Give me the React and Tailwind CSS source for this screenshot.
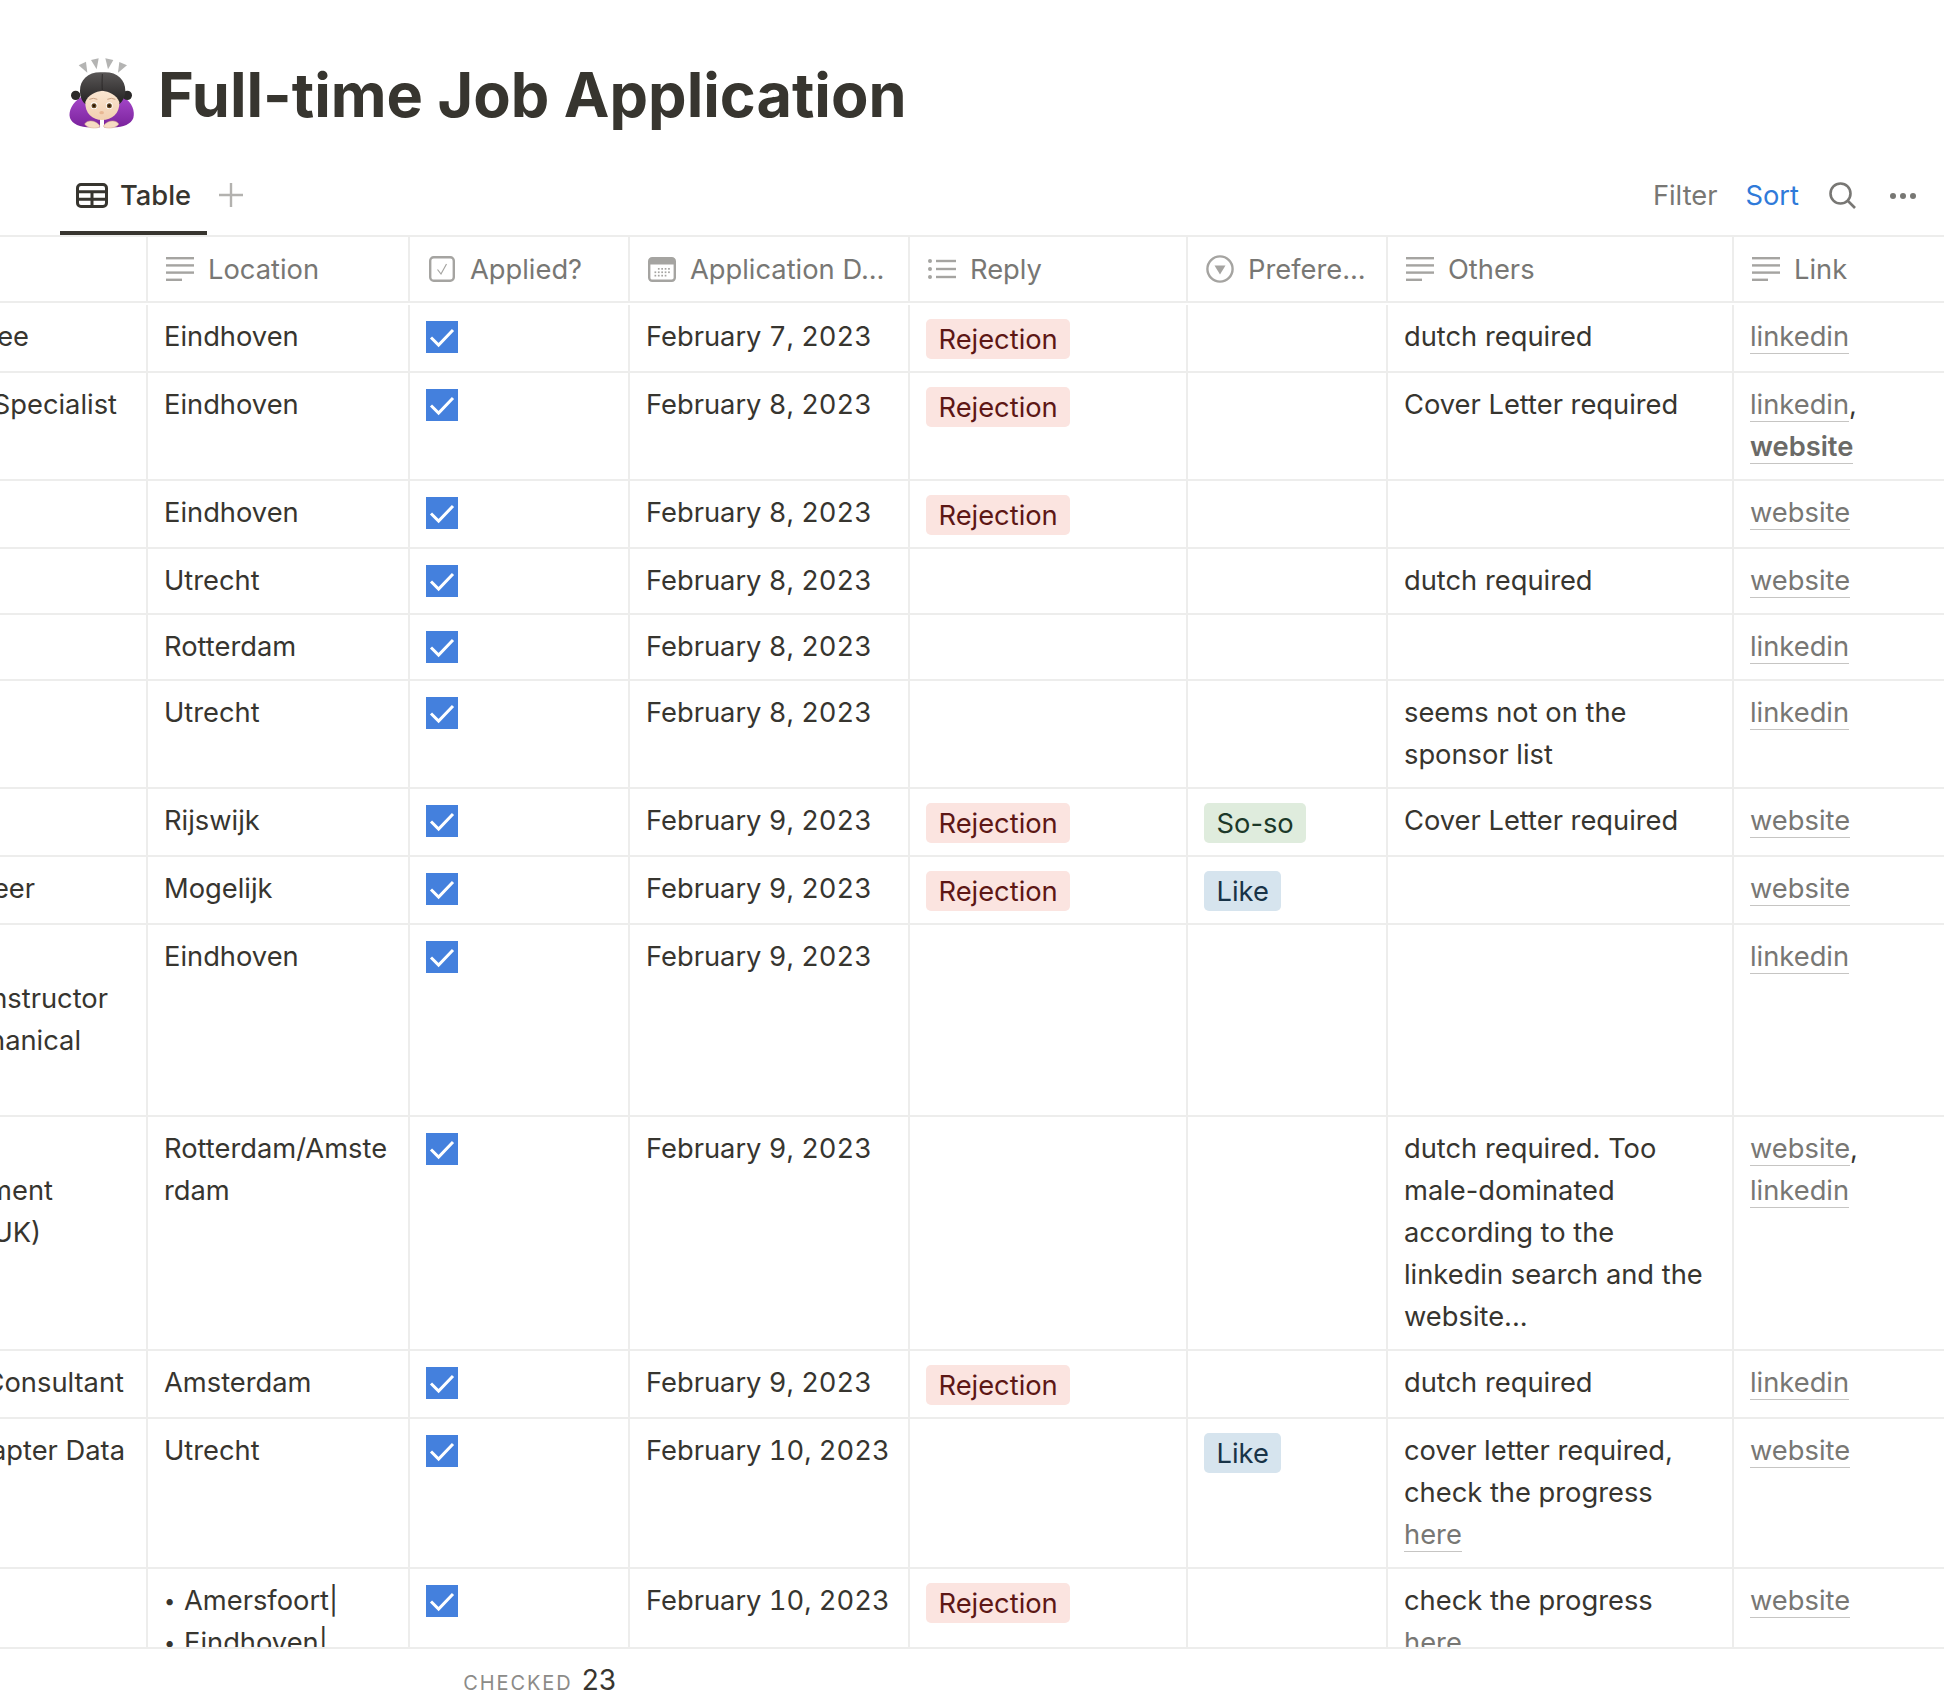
import React from 'react';

const LINE = 'border-[#ededec]';

// the bowing woman emoji next to the page title
function TitleEmoji() {
  return (
    <svg viewBox="0 0 330 300" className="w-[110px] h-[100px] shrink-0">
      <defs>
        <linearGradient id="hair" x1="0" y1="0" x2="0" y2="1">
          <stop offset="0" stopColor="#5a5757" />
          <stop offset="1" stopColor="#242222" />
        </linearGradient>
        <linearGradient id="sleeve" x1="0" y1="0" x2="0" y2="1">
          <stop offset="0" stopColor="#a447c8" />
          <stop offset="1" stopColor="#7a229c" />
        </linearGradient>
        <linearGradient id="skin" x1="0" y1="0" x2="0" y2="1">
          <stop offset="0" stopColor="#fae6d2" />
          <stop offset="1" stopColor="#f2d0b0" />
        </linearGradient>
      </defs>
      <g fill="#b4b4b3">
        <polygon points="86,76 108,65 112,98" />
        <polygon points="123,60 146,55 140,88" />
        <polygon points="166,55 190,60 174,88" />
        <polygon points="208,66 231,76 204,98" />
      </g>
      <path d="M92 172 C68 188 54 214 60 234 C66 252 90 262 122 262 L150 262 L150 228 L116 196 Z" fill="url(#sleeve)" />
      <path d="M222 172 C246 188 256 214 250 234 C244 252 220 262 190 262 L162 262 L162 228 L198 196 Z" fill="url(#sleeve)" />
      <circle cx="77" cy="166" r="14" fill="#2b2929" />
      <circle cx="232" cy="166" r="14" fill="#2b2929" />
      <path d="M158 97 C116 94 90 118 90 152 C90 170 96 184 106 192 L208 192 C218 184 226 170 226 152 C226 118 200 94 158 97 Z" fill="url(#hair)" />
      <path d="M157 152 C138 154 114 164 106 186 C104 220 128 240 156 240 C186 240 210 220 208 186 C200 164 176 154 157 152 Z" fill="url(#skin)" />
      <path d="M157 102 C156 124 156 140 157 152" stroke="#1f1d1d" strokeWidth="2" fill="none" />
      <path d="M118 178 Q130 172 142 178 M172 178 Q184 172 196 178" stroke="#c9a183" strokeWidth="3" fill="none" />
      <circle cx="132" cy="197" r="10" fill="#fff" />
      <circle cx="178" cy="197" r="10" fill="#fff" />
      <circle cx="132" cy="197" r="7.5" fill="#6b4a22" />
      <circle cx="178" cy="197" r="7.5" fill="#6b4a22" />
      <circle cx="132" cy="197" r="3.5" fill="#1d130a" />
      <circle cx="178" cy="197" r="3.5" fill="#1d130a" />
      <ellipse cx="155" cy="218" rx="7" ry="5" fill="#e8b793" />
      <path d="M104 252 C112 238 138 240 150 258 C150 266 112 268 104 252 Z" fill="#f6dcc3" stroke="#d9ad8c" strokeWidth="1.5" />
      <path d="M206 252 C198 238 172 240 160 258 C160 266 198 268 206 252 Z" fill="#f6dcc3" stroke="#d9ad8c" strokeWidth="1.5" />
    </svg>
  );
}

function TextIcon() {
  return (
    <svg viewBox="0 0 28 24" className="w-[28px] h-[24px] shrink-0" fill="#a5a4a1">
      <rect x="0" y="0" width="28" height="2.4" />
      <rect x="0" y="7.2" width="28" height="2.4" />
      <rect x="0" y="14.4" width="28" height="2.4" />
      <rect x="0" y="21.6" width="16" height="2.4" />
    </svg>
  );
}

function CheckIcon() {
  return (
    <span className="w-[28px] flex justify-center shrink-0">
      <svg viewBox="0 0 26 26" className="w-[26px] h-[26px]" fill="none">
        <rect x="1.2" y="1.2" width="23.6" height="23.6" rx="3.5" stroke="#a5a4a1" strokeWidth="2.4" />
        <path d="M8.5 13.5 L12 18 L17.5 8" stroke="#a5a4a1" strokeWidth="1.2" />
      </svg>
    </span>
  );
}

function CalendarIcon() {
  const dots = [];
  for (let r = 0; r < 3; r++) {
    for (let c = 0; c < 5; c++) {
      if ((r === 0 && c === 0) || (r === 2 && c === 4)) continue;
      dots.push(<rect key={`${r}-${c}`} x={6.5 + c * 3.4} y={11 + r * 3.4} width="1.7" height="1.7" fill="#a5a4a1" />);
    }
  }
  return (
    <svg viewBox="0 0 28 25" className="w-[28px] h-[25px] shrink-0" fill="none">
      <rect x="1.2" y="1.2" width="25.6" height="22.6" rx="3" stroke="#a5a4a1" strokeWidth="2.4" />
      <path d="M1 4 Q1 1 4 1 H24 Q27 1 27 4 V7.5 H1 Z" fill="#a5a4a1" />
      {dots}
    </svg>
  );
}

function ListIcon() {
  return (
    <svg viewBox="0 0 28 20" className="w-[28px] h-[20px] shrink-0" fill="#a5a4a1">
      <circle cx="2" cy="2" r="2" />
      <circle cx="2" cy="10" r="2" />
      <circle cx="2" cy="18" r="2" />
      <rect x="8" y="0.8" width="20" height="2.4" />
      <rect x="8" y="8.8" width="20" height="2.4" />
      <rect x="8" y="16.8" width="20" height="2.4" />
    </svg>
  );
}

function SelectIcon() {
  return (
    <svg viewBox="0 0 28 28" className="w-[28px] h-[28px] shrink-0" fill="none">
      <circle cx="14" cy="14" r="12.6" stroke="#a5a4a1" strokeWidth="2.4" />
      <polygon points="8.5,10.5 19.5,10.5 14,19.5" fill="#a5a4a1" />
    </svg>
  );
}

function TableIcon() {
  return (
    <svg viewBox="0 0 32 25" className="w-[32px] h-[25px] shrink-0" fill="none" stroke="#37352f" strokeWidth="3">
      <rect x="1.5" y="1.5" width="29" height="22" rx="3.5" />
      <path d="M1.5 8.8 H30.5 M1.5 16.2 H30.5 M16 8.8 V23.5" />
    </svg>
  );
}

function HeaderCell({ icon, label, width }) {
  return (
    <div className={`flex items-center gap-[14px] pl-[18px] border-r-2 ${LINE} ${width}`}>
      {icon}
      <span className="whitespace-nowrap pt-[2px]">{label}</span>
    </div>
  );
}

function Tag({ children, tone = 'red' }) {
  const tones = {
    red: 'bg-[#fbe4e0] text-[#5d1715]',
    green: 'bg-[#dfecdd] text-[#1c3829]',
    blue: 'bg-[#d6e4ee] text-[#183347]',
  };
  return (
    <span className={`flex w-fit items-center h-[40px] px-[12.5px] pt-[1px] rounded-[5px] whitespace-nowrap ${tones[tone]}`}>
      {children}
    </span>
  );
}

function DocLink({ children, bold }) {
  return (
    <a className={`border-b border-[#c6c5c3] ${bold ? 'font-semibold text-[#6b6a67]' : 'text-[#787774]'}`}>
      {children}
    </a>
  );
}

const linkedin = <DocLink>linkedin</DocLink>;
const website = <DocLink>website</DocLink>;
const here = <DocLink>here</DocLink>;

// clipped text of the scrolled-away first column, anchored on where each line ends
const rows = [
  {
    title: [['ee', 'pr-[117px]']],
    location: 'Eindhoven',
    date: 'February 7, 2023',
    reply: true,
    others: 'dutch required',
    link: linkedin,
  },
  {
    title: [['Specialist', 'pr-[29px]']],
    location: 'Eindhoven',
    date: 'February 8, 2023',
    reply: true,
    others: 'Cover Letter required',
    link: (
      <>
        {linkedin},<br />
        <DocLink bold>website</DocLink>
      </>
    ),
  },
  { location: 'Eindhoven', date: 'February 8, 2023', reply: true, link: website },
  { location: 'Utrecht', date: 'February 8, 2023', others: 'dutch required', link: website },
  { location: 'Rotterdam', date: 'February 8, 2023', link: linkedin },
  { location: 'Utrecht', date: 'February 8, 2023', others: 'seems not on the sponsor list', link: linkedin },
  {
    location: 'Rijswijk',
    date: 'February 9, 2023',
    reply: true,
    pref: ['So-so', 'green'],
    others: 'Cover Letter required',
    link: website,
  },
  {
    title: [['eer', 'pr-[111px]']],
    location: 'Mogelijk',
    date: 'February 9, 2023',
    reply: true,
    pref: ['Like', 'blue'],
    link: website,
  },
  {
    title: [null, ['nstructor', 'pr-[38px]'], ['hanical', 'pr-[65px]'], null],
    location: 'Eindhoven',
    date: 'February 9, 2023',
    link: linkedin,
  },
  {
    title: [null, ['ment', 'pr-[93px]'], ['UK)', 'pr-[105px]']],
    location: 'Rotterdam/Amsterdam',
    date: 'February 9, 2023',
    others: 'dutch required. Too male-dominated according to the linkedin search and the website...',
    link: (
      <>
        {website},<br />
        {linkedin}
      </>
    ),
  },
  {
    title: [['Consultant', 'pr-[22px]']],
    location: 'Amsterdam',
    date: 'February 9, 2023',
    reply: true,
    others: 'dutch required',
    link: linkedin,
  },
  {
    title: [['apter Data', 'pr-[21px]']],
    location: 'Utrecht',
    date: 'February 10, 2023',
    pref: ['Like', 'blue'],
    others: (
      <>
        cover letter required, check the progress {here}
      </>
    ),
    link: website,
  },
  {
    location: (
      <ul>
        <li className="flex">
          <span className="w-[20px] shrink-0 text-[20px]">•</span>Amersfoort|
        </li>
        <li className="flex">
          <span className="w-[20px] shrink-0 text-[20px]">•</span>Eindhoven|
        </li>
      </ul>
    ),
    date: 'February 10, 2023',
    reply: true,
    others: <>check the progress {here}</>,
    link: website,
  },
];

const textCell = `pt-[11px] pb-[11px] px-[16px] border-r-2 ${LINE}`;
const tagCell = `pt-[14px] pb-[12px] px-[16px] border-r-2 ${LINE}`;

function Row({ row }) {
  return (
    <div className={`flex border-b-2 ${LINE}`}>
      <div className={`w-[148px] shrink-0 overflow-hidden pt-[11px] pb-[11px] border-r-2 ${LINE}`}>
        {(row.title || [null]).map((line, i) => (
          <div key={i} className={`h-[42px] flex justify-end whitespace-nowrap ${line ? line[1] : ''}`}>
            {line ? line[0] : ''}
          </div>
        ))}
      </div>
      <div className={`w-[262px] shrink-0 break-words ${textCell}`}>{row.location}</div>
      <div className={`w-[220px] shrink-0 pt-[16px] pb-[12px] px-[16px] border-r-2 ${LINE}`}>
        <span className="flex items-center justify-center w-[32px] h-[32px] bg-[#4480dd]">
          <svg viewBox="0 0 32 32" className="w-[32px] h-[32px]" fill="none">
            <path d="M5 16.5 L12.6 24 L27 9" stroke="#fff" strokeWidth="3" />
          </svg>
        </span>
      </div>
      <div className={`w-[280px] shrink-0 tabular-nums ${textCell}`}>{row.date}</div>
      <div className={`w-[278px] shrink-0 ${row.reply ? tagCell : textCell}`}>{row.reply && <Tag>Rejection</Tag>}</div>
      <div className={`w-[200px] shrink-0 ${row.pref ? tagCell : textCell}`}>
        {row.pref && <Tag tone={row.pref[1]}>{row.pref[0]}</Tag>}
      </div>
      <div className={`w-[346px] shrink-0 ${textCell}`}>{row.others}</div>
      <div className="flex-1 pt-[11px] pb-[11px] px-[16px]">{row.link}</div>
    </div>
  );
}

export default function App() {
  return (
    <div className="w-[1944px] h-[1696px] flex flex-col overflow-hidden bg-white text-[#37352f] text-[27.3px] leading-[42px] font-[Inter,'Liberation_Sans',sans-serif]">
      {/* Title */}
      <div className="h-[160px] shrink-0 pl-[50px] pt-[40px] flex items-start">
        <TitleEmoji />
        <h1 className="-ml-[2px] mt-[18px] text-[61.2px] leading-[75px] font-bold whitespace-nowrap">
          Full-time Job Application
        </h1>
      </div>

      {/* Views and actions */}
      <div className="h-[75px] shrink-0 flex items-start justify-between pl-[60px]">
        <div className="flex items-start">
          <div className="w-[147px] h-[75px] flex items-start gap-[12px] pl-[16px] pt-[15px] border-b-4 border-[#37352f] font-medium">
            <span className="mt-[8px]">
              <TableIcon />
            </span>
            Table
          </div>
          <svg viewBox="0 0 24 24" className="w-[24px] h-[24px] ml-[12px] mt-[23px]" stroke="#b3b2af" strokeWidth="2.4">
            <path d="M12 0 V24 M0 12 H24" />
          </svg>
        </div>
        <div className="flex items-start pt-[15px] pr-[28px] text-[#787774]">
          <span>Filter</span>
          <span className="ml-[28px] text-[#2f7ad9]">Sort</span>
          <svg viewBox="0 0 27 27" className="w-[27px] h-[27px] ml-[30px] mt-[7px]" fill="none" stroke="#787774" strokeWidth="2.6">
            <circle cx="11.5" cy="11.5" r="10" />
            <path d="M18.5 18.5 L26 26" />
          </svg>
          <svg viewBox="0 0 26 6" className="w-[26px] h-[6px] ml-[34px] mt-[18px]" fill="#787774">
            <circle cx="3" cy="3" r="3" />
            <circle cx="13" cy="3" r="3" />
            <circle cx="23" cy="3" r="3" />
          </svg>
        </div>
      </div>

      {/* Table header */}
      <div className={`h-[68px] shrink-0 flex border-t-2 border-b-2 ${LINE} text-[#787774]`}>
        <div className={`w-[148px] shrink-0 border-r-2 ${LINE}`} />
        <HeaderCell icon={<TextIcon />} label="Location" width="w-[262px] shrink-0" />
        <HeaderCell icon={<CheckIcon />} label="Applied?" width="w-[220px] shrink-0" />
        <HeaderCell icon={<CalendarIcon />} label="Application D..." width="w-[280px] shrink-0" />
        <HeaderCell icon={<ListIcon />} label="Reply" width="w-[278px] shrink-0" />
        <HeaderCell icon={<SelectIcon />} label="Prefere..." width="w-[200px] shrink-0" />
        <HeaderCell icon={<TextIcon />} label="Others" width="w-[346px] shrink-0" />
        <div className="flex-1 flex items-center gap-[14px] pl-[18px]">
          <TextIcon />
          <span className="pt-[2px]">Link</span>
        </div>
      </div>

      {/* Table body */}
      <div className="flex-1 min-h-0 overflow-hidden pt-[2px]">
        {rows.map((row, i) => (
          <Row key={i} row={row} />
        ))}
      </div>

      {/* Footer calculation */}
      <div className={`h-[49px] shrink-0 flex border-t-2 ${LINE}`}>
        <div className="w-[410px] shrink-0" />
        <div className="w-[220px] shrink-0 flex items-baseline justify-end gap-[9px] pr-[14px] pt-[14px]">
          <span className="text-[20px] leading-[34px] tracking-[1.9px] text-[#8c8b88]">CHECKED</span>
          <span className="text-[28px] leading-[34px]">23</span>
        </div>
      </div>
    </div>
  );
}
